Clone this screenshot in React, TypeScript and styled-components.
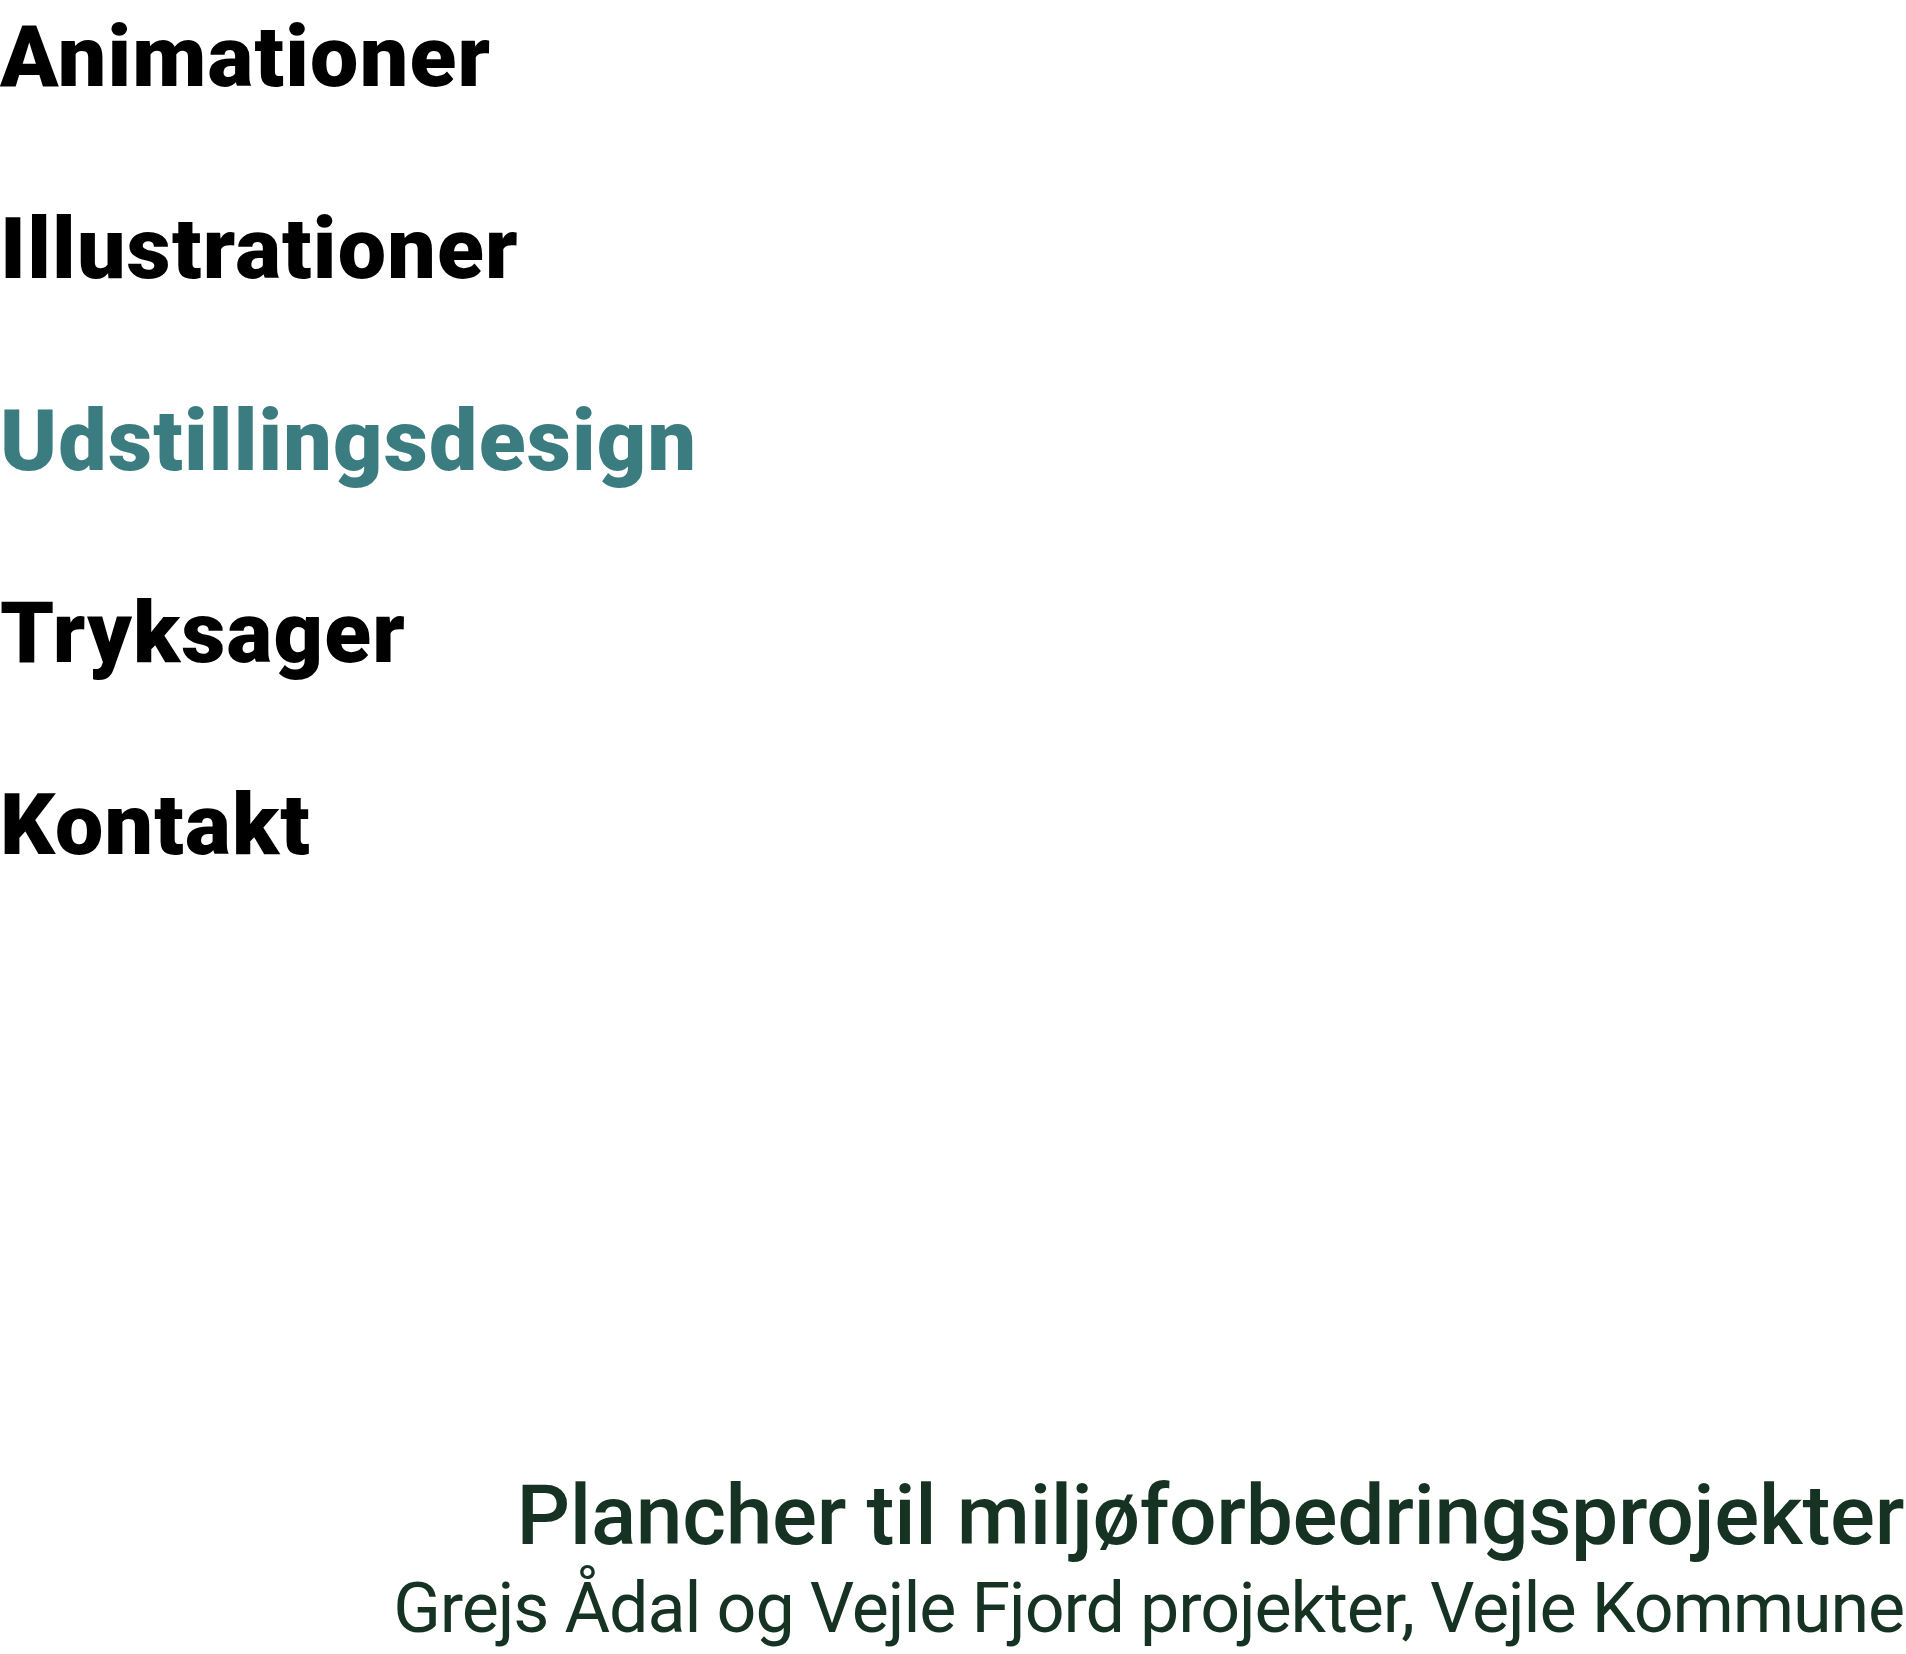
import React from "react";
import styled, { createGlobalStyle } from "styled-components";

const GlobalStyle = createGlobalStyle`
  html, body {
    margin: 0;
    padding: 0;
    background: #ffffff;
  }
`;

const Page = styled.div`
  min-height: 100vh;
  display: flex;
  flex-direction: column;
  justify-content: space-between;
  box-sizing: border-box;
`;

const Nav = styled.nav`
  display: flex;
  flex-direction: column;
  align-items: flex-start;
  gap: 106px;
  padding-top: 14px;
`;

const NavLink = styled.a<{ $active?: boolean }>`
  font-family: Roboto, "Liberation Sans", sans-serif;
  font-weight: 900;
  font-size: 86px;
  line-height: 1;
  letter-spacing: 1.2px;
  color: ${(p) => (p.$active ? "#3a7c7f" : "#000000")};
  text-decoration: none;
  cursor: pointer;
`;

const Caption = styled.footer`
  display: flex;
  flex-direction: column;
  align-items: flex-end;
  padding: 0 2px 11px 0;
  color: #163222;
  font-family: Roboto, "Liberation Sans", sans-serif;
`;

const CaptionTitle = styled.h1`
  margin: 0;
  font-size: 84px;
  font-weight: 500;
  line-height: 1;
  letter-spacing: -0.35px;
`;

const CaptionSub = styled.p`
  margin: 15px 0 0;
  font-size: 70px;
  font-weight: 400;
  line-height: 1;
  letter-spacing: -1.12px;
`;

const links = [
  "Animationer",
  "Illustrationer",
  "Udstillingsdesign",
  "Tryksager",
  "Kontakt",
];

export default function App() {
  return (
    <>
      <GlobalStyle />
      <Page>
        <Nav>
          {links.map((label) => (
            <NavLink key={label} $active={label === "Udstillingsdesign"}>
              {label}
            </NavLink>
          ))}
        </Nav>
        <Caption>
          <CaptionTitle>Plancher til miljøforbedringsprojekter</CaptionTitle>
          <CaptionSub>Grejs Ådal og Vejle Fjord projekter, Vejle Kommune</CaptionSub>
        </Caption>
      </Page>
    </>
  );
}
